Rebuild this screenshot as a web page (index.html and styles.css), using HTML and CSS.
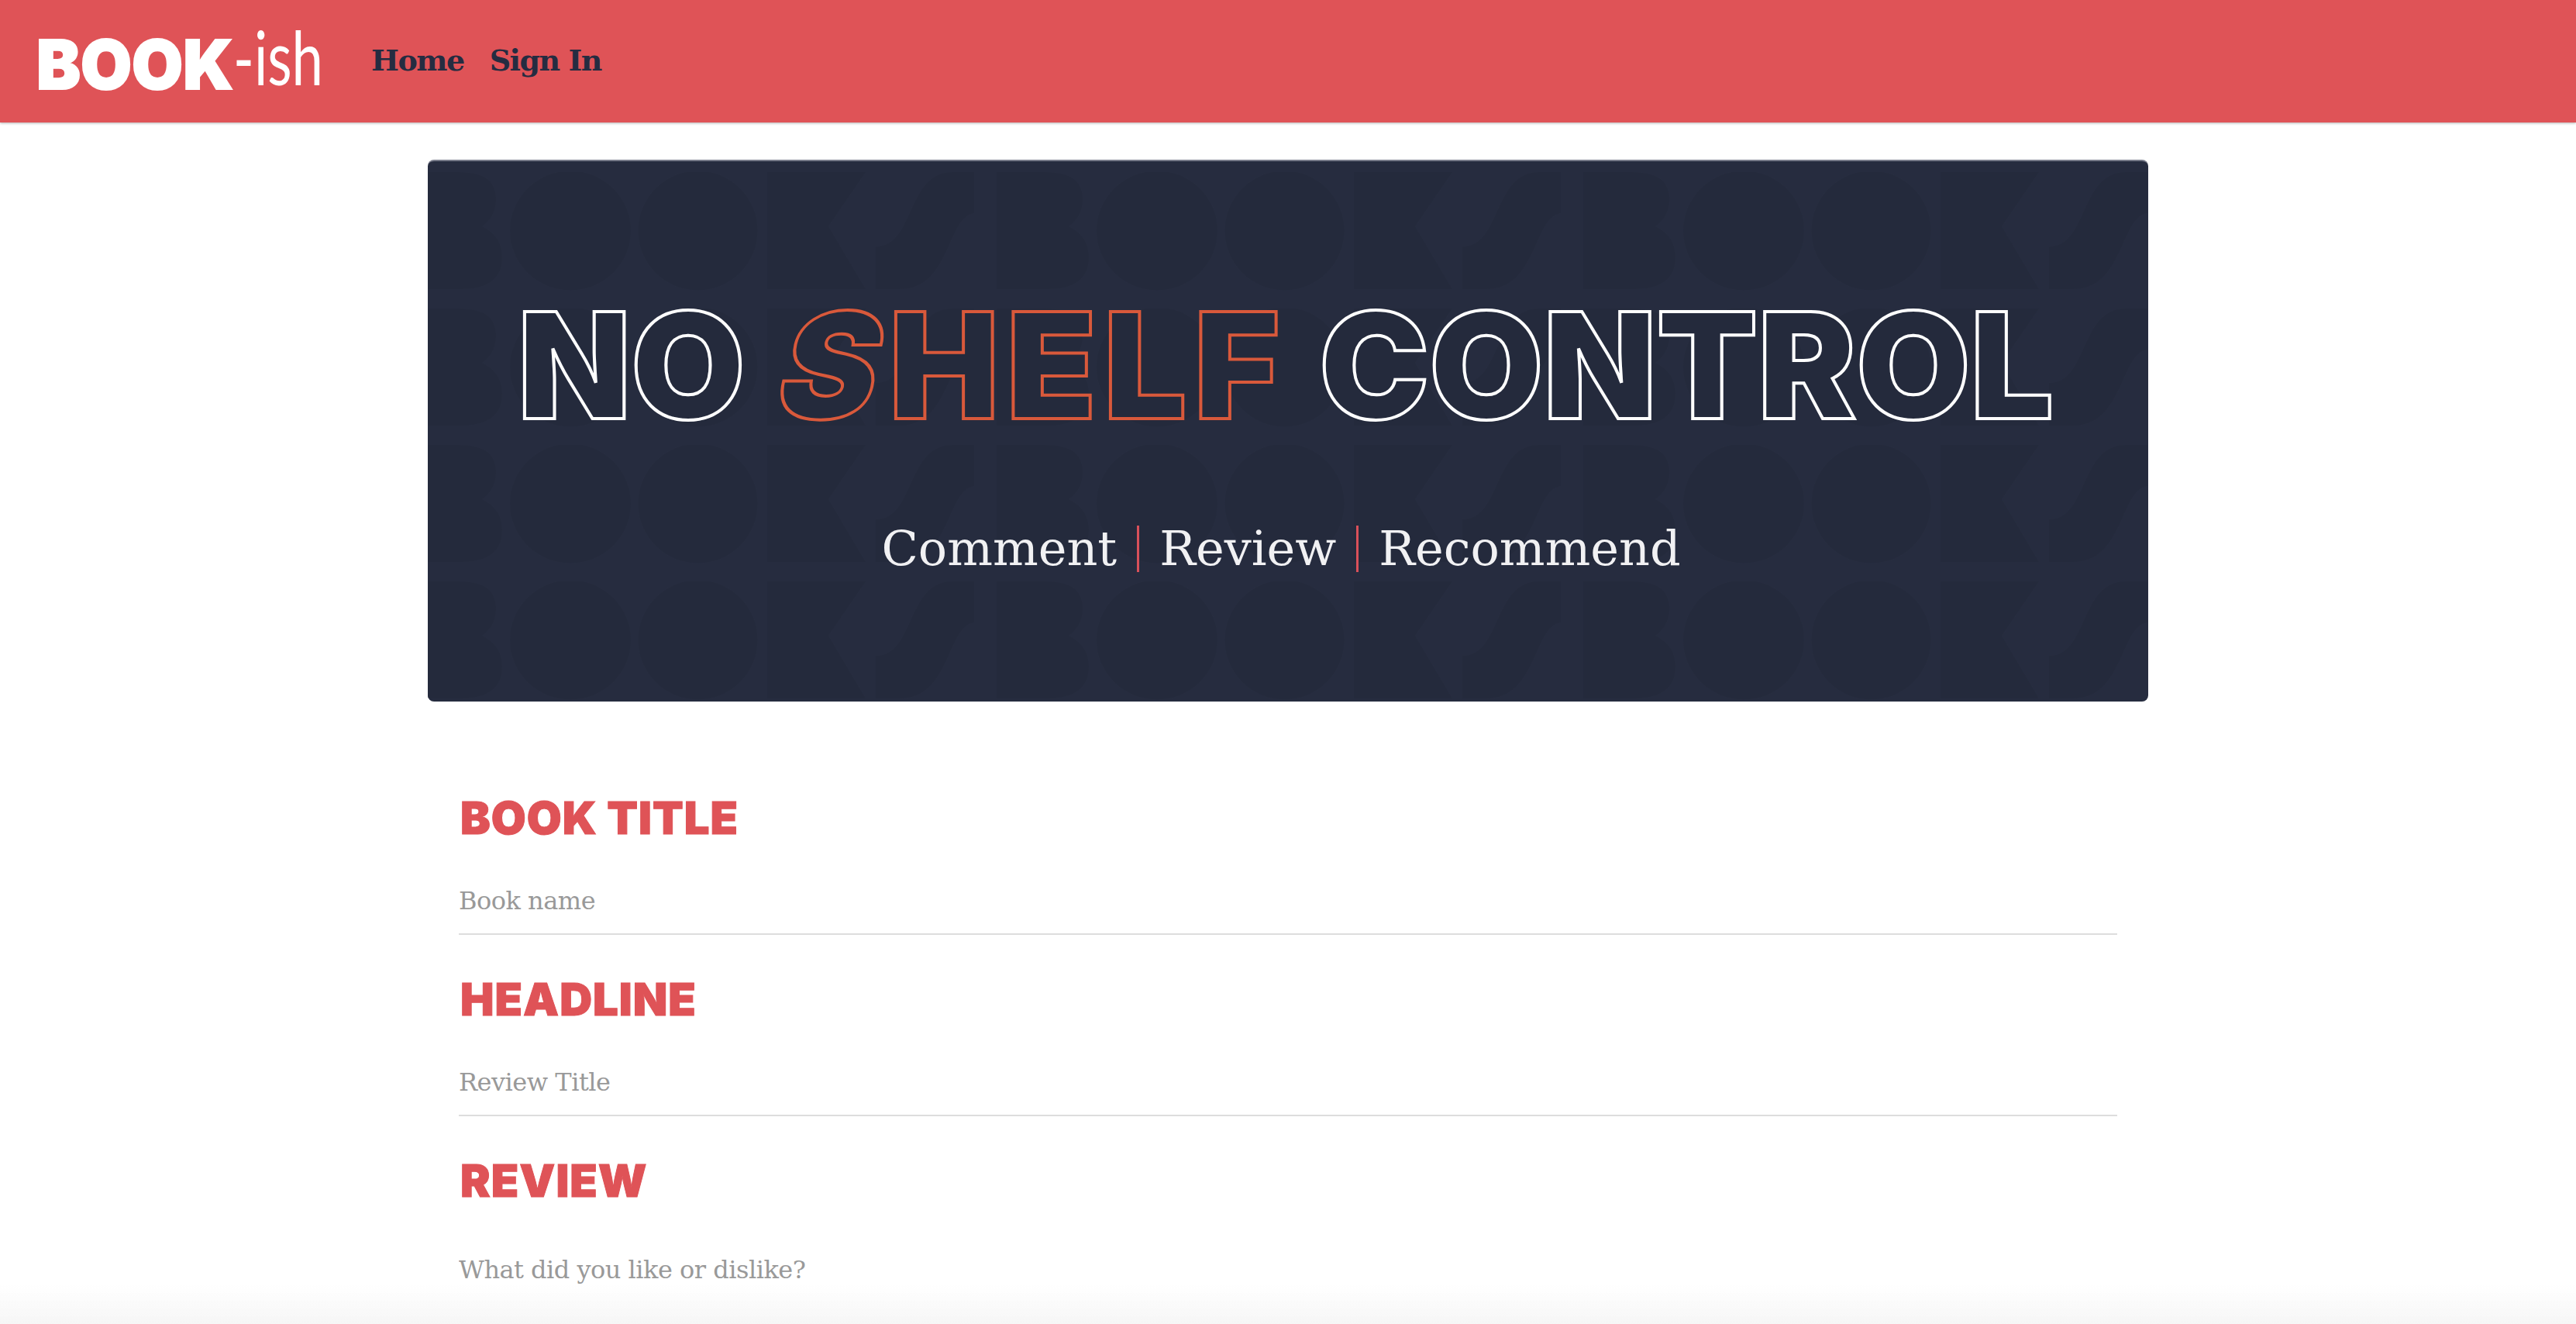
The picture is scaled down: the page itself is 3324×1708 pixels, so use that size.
FILE: index.html
```html
<!DOCTYPE html>
<html lang="en">
<head>
<meta charset="utf-8">
<title>Book-ish</title>
<link rel="stylesheet" href="styles.css">
</head>
<body>
<header class="nav">
  <a class="logo" href="#" aria-label="BOOK-ish">
    <svg class="logo-svg" width="370" height="90" viewBox="0 0 370 90">
      <text class="logo-book" x="-2" y="81" textLength="254" lengthAdjust="spacingAndGlyphs">BOOK</text>
      <text class="logo-ish" x="252" y="76" textLength="116" lengthAdjust="spacingAndGlyphs">-ish</text>
    </svg>
  </a>
  <nav class="nav-links">
    <a class="nav-link" href="#">Home</a>
    <a class="nav-link" href="#">Sign In</a>
  </nav>
</header>
<main class="page">
  <section class="hero">
    <svg class="hero-pattern" width="2220" height="699" aria-hidden="true">
      <defs>
        <pattern id="tile" patternUnits="userSpaceOnUse" x="-23" y="14" width="757" height="176">
          <path d="M0 0H62C100 0 111 14 111 36C111 52 103 63 93 70C109 78 119 90 119 110C119 136 102 151 66 151H0Z"/>
          <ellipse cx="207" cy="75.5" rx="78" ry="77"/>
          <ellipse cx="371.5" cy="75.5" rx="77" ry="77"/>
          <path d="M461 0H588L540 70L588 151H461Z"/>
          <path d="M728 0V53C692 58 698 151 632 151H601V96C652 96 640 0 700 0Z"/>
        </pattern>
      </defs>
      <rect class="hero-pattern-fill" width="2220" height="699"/>
    </svg>
    <h1 class="hero-title">NO <span class="hero-accent"><span class="hero-slant">S</span>HELF</span> CONTROL</h1>
    <p class="hero-tag">Comment<span class="sep"></span>Review<span class="sep"></span>Recommend</p>
  </section>
  <form class="form">
    <div class="field">
      <label class="field-label" for="book">BOOK TITLE</label>
      <input class="field-input" id="book" placeholder="Book name">
    </div>
    <div class="field">
      <label class="field-label" for="headline">HEADLINE</label>
      <input class="field-input" id="headline" placeholder="Review Title">
    </div>
    <div class="field field-last">
      <label class="field-label" for="review">REVIEW</label>
      <textarea class="field-area" id="review" placeholder="What did you like or dislike?"></textarea>
    </div>
  </form>
</main>
<div class="bottom-fade"></div>
</body>
</html>
```
FILE: styles.css
```css
* { box-sizing: border-box; }
html, body { margin: 0; height: 100%; overflow: hidden; background: #fff; }
body { font-family: "DejaVu Serif", serif; }

.nav {
  height: 158px;
  background: #df5357;
  box-shadow: 0 1px 3px rgba(0,0,0,.3);
  display: flex;
  align-items: center;
  padding-left: 49px;
  gap: 60px;
  position: relative;
}
.logo { display: block; height: 90px; }
.logo-svg { display: block; overflow: visible; }
.logo-book { font: 900 88px "Inter", sans-serif; fill: #fff; stroke: #fff; stroke-width: 2px; }
.logo-ish { font: 400 96px "Lato", sans-serif; fill: #fff; }
.nav-links { display: flex; gap: 33px; margin-top: -4px; }
.nav-link { font: 700 38px "DejaVu Serif", serif; color: #252c41; text-decoration: none; letter-spacing: -1.5px; }

.page { width: 2220px; margin: 48px auto 0; }
.hero {
  position: relative;
  height: 699px;
  background: #262c3f;
  border-top: 2px solid #777b8a;
  border-radius: 8px;
  overflow: hidden;
  display: flex;
  flex-direction: column;
  align-items: center;
  padding-top: 149px;
}
.hero-pattern { position: absolute; left: 0; top: 0; }
.hero-pattern-fill { fill: url(#tile); }
#tile path, #tile ellipse { fill: #242a3c; }
.hero-title {
  position: relative;
  margin: 0 0 0 -6px;
  font: 900 190px/228px "Inter", sans-serif;
  color: #242a3c;
  -webkit-text-stroke: 4px #fff;
  white-space: nowrap;
  word-spacing: 12px;
}
.hero-accent { -webkit-text-stroke-color: #d9593b; letter-spacing: 9px; margin-right: -8px; }
.hero-slant { display: inline-block; transform: skewX(-14deg); }
.hero-tag {
  position: relative;
  margin: 85px 18px 0 0;
  font: 400 62px/75px "DejaVu Serif", serif;
  color: #f1f1f3;
  display: flex;
  align-items: center;
}
.sep { width: 3px; height: 60px; background: #d9505a; margin: 0 26px; }

.form { padding: 0 40px; }
.field { height: 234px; }
.field:first-child { margin-top: 115px; }
.field-last { height: auto; }
.field-label {
  display: block;
  padding-left: 2px;
  font: 900 58px/70px "Inter", sans-serif;
  letter-spacing: 1px;
  color: #df5357;
  -webkit-text-stroke: 1px #df5357;
}
.field-input, .field-area {
  display: block;
  width: 100%;
  border: 0;
  border-bottom: 2px solid #ddd;
  outline: 0;
  padding: 0;
  background: transparent;
  font: 400 32px/40px "DejaVu Serif", serif;
  letter-spacing: -0.5px;
  color: #333;
}
.field-input { height: 86px; margin-top: 30px; }
.field-area { height: 60px; border-bottom: 0; margin-top: 60px; resize: none; }
::placeholder { color: #999; opacity: 1; }

.bottom-fade {
  position: fixed;
  left: 0; right: 0; bottom: 0;
  height: 50px;
  background: linear-gradient(rgba(246,246,246,0), #f6f6f6);
  pointer-events: none;
}
```
